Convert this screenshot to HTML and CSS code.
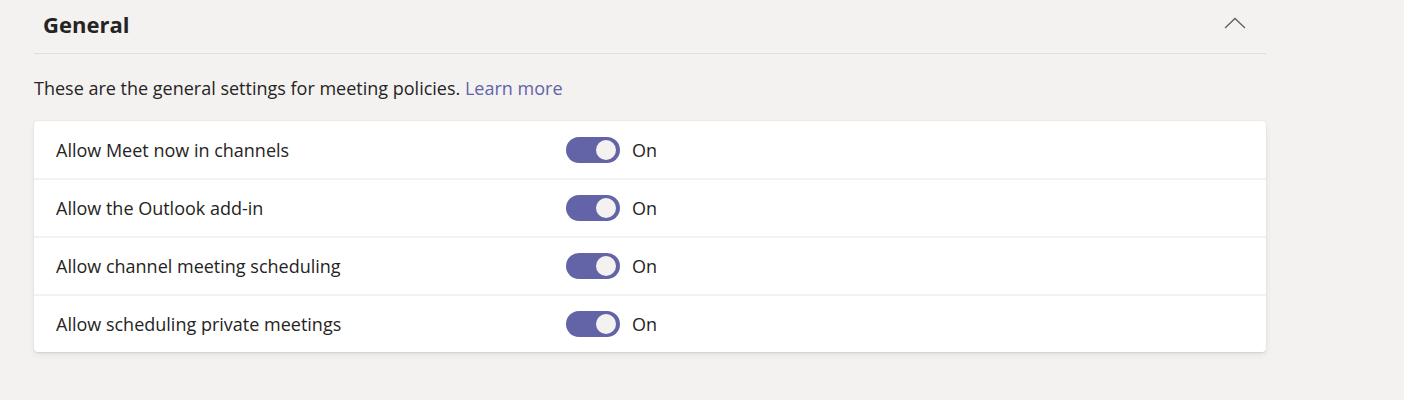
FILE: index.html
```html
<!DOCTYPE html>
<html>
<head>
<meta charset="utf-8">
<link rel="stylesheet" href="styles.css">
</head>
<body>
<div class="page">
  <div class="section-head">
    <h2 class="title">General</h2>
    <button class="collapse" aria-label="Collapse">
      <svg width="22" height="12" viewBox="0 0 22 12"><path d="M1 11 L11 1.5 L21 11" fill="none" stroke="#605e5c" stroke-width="1.3"/></svg>
    </button>
  </div>
  <p class="desc">These are the general settings for meeting policies. <a class="link" href="#">Learn more</a></p>
  <div class="card">
    <div class="row"><span class="label">Allow Meet now in channels</span><span class="ctl"><span class="toggle"><span class="knob"></span></span><span class="state">On</span></span></div>
    <div class="row"><span class="label">Allow the Outlook add-in</span><span class="ctl"><span class="toggle"><span class="knob"></span></span><span class="state">On</span></span></div>
    <div class="row"><span class="label">Allow channel meeting scheduling</span><span class="ctl"><span class="toggle"><span class="knob"></span></span><span class="state">On</span></span></div>
    <div class="row"><span class="label">Allow scheduling private meetings</span><span class="ctl"><span class="toggle"><span class="knob"></span></span><span class="state">On</span></span></div>
  </div>
</div>
</body>
</html>
```
FILE: styles.css
```css
html, body {
  margin: 0;
  padding: 0;
  background: #f3f2f1;
  height: 100%;
}
body {
  font-family: "Open Sans", "Noto Sans", sans-serif;
  color: #252423;
}
.page {
  width: 1232px;
  margin-left: 34px;
}
.section-head {
  display: flex;
  align-items: center;
  justify-content: space-between;
  height: 53px;
  border-bottom: 1px solid #e1dfdd;
  padding-left: 9px;
  padding-right: 20px;
}
.title {
  margin: 0;
  font-size: 22px;
  font-weight: 700;
  color: #252423;
  line-height: 1;
  margin-top: -5px;
}
.collapse {
  background: none;
  border: 0;
  padding: 0;
  margin-top: -7px;
  display: flex;
}
.desc {
  margin: 22px 0 0 0;
  font-size: 18px;
  line-height: 24px;
  color: #252423;
}
.link {
  color: #6264a7;
  text-decoration: none;
}
.card {
  margin-top: 21px;
  background: #fff;
  border-radius: 4px;
  box-shadow: 0 0.6px 1.8px rgba(0,0,0,0.10), 0 3px 7px rgba(0,0,0,0.06);
}
.row {
  display: flex;
  align-items: center;
  box-sizing: border-box;
  height: 58px;
  padding-left: 22px;
  border-top: 2px solid #f3f2f1;
}
.row:first-child {
  border-top: 0;
  height: 57px;
}
.label {
  width: 510px;
  font-size: 18px;
}
.ctl {
  display: flex;
  align-items: center;
  gap: 12px;
}
.toggle {
  width: 54px;
  height: 26px;
  border-radius: 13px;
  background: #6264a7;
  display: flex;
  align-items: center;
  justify-content: flex-end;
  padding-right: 4px;
  box-sizing: border-box;
}
.knob {
  width: 20px;
  height: 20px;
  border-radius: 50%;
  background: #f3f2f1;
}
.state {
  font-size: 18px;
}
```
